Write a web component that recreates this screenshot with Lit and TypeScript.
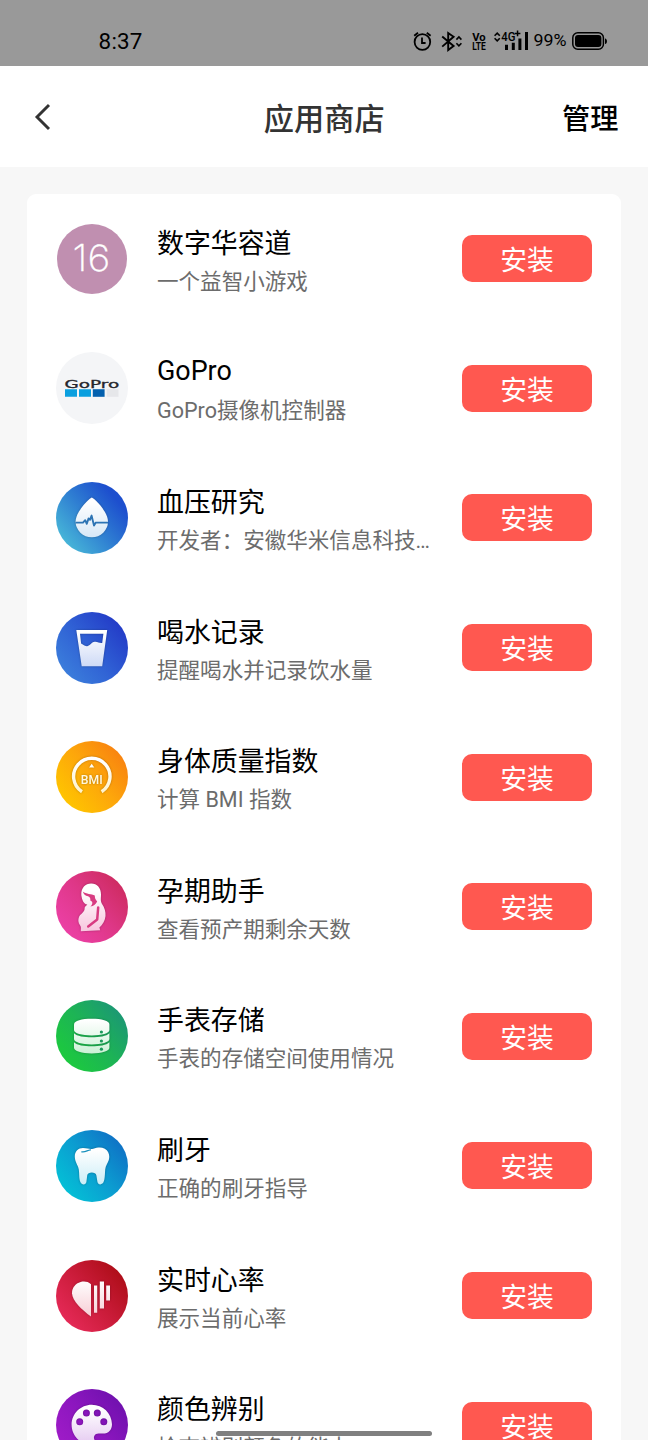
import { LitElement, html, svg, css } from "lit";
import { customElement, property } from "lit/decorators.js";
import { styleMap } from "lit/directives/style-map.js";

interface AppEntry {
  icon: string;
  name: string;
  note: string;
}

const APPS: AppEntry[] = [
  { icon: "puzzle", name: "数字华容道", note: "一个益智小游戏" },
  { icon: "gopro", name: "GoPro", note: "GoPro摄像机控制器" },
  { icon: "blood", name: "血压研究", note: "开发者：安徽华米信息科技有限公司" },
  { icon: "water", name: "喝水记录", note: "提醒喝水并记录饮水量" },
  { icon: "bmi", name: "身体质量指数", note: "计算 BMI 指数" },
  { icon: "pregnancy", name: "孕期助手", note: "查看预产期剩余天数" },
  { icon: "storage", name: "手表存储", note: "手表的存储空间使用情况" },
  { icon: "tooth", name: "刷牙", note: "正确的刷牙指导" },
  { icon: "heart", name: "实时心率", note: "展示当前心率" },
  { icon: "palette", name: "颜色辨别", note: "检查辨别颜色的能力" },
];

const BACKGROUNDS: Record<string, string> = {
  puzzle: "#c08fb0",
  gopro: "#f4f5f7",
  blood: "linear-gradient(50deg, #48b8d8 12%, #2f7fd2 48%, #1d4fce 80%)",
  water: "linear-gradient(50deg, #3c80dc 10%, #2f5fd4 50%, #2238c6 90%)",
  bmi: "linear-gradient(50deg, #ffc400 14%, #fda60b 52%, #f88010 90%)",
  pregnancy: "linear-gradient(50deg, #ec40a6 12%, #de3787 52%, #cc2a5c 92%)",
  storage: "linear-gradient(50deg, #1cc840 17%, #1db356 52%, #1b9478 92%)",
  tooth: "linear-gradient(50deg, #04bfd6 14%, #0c9bd0 52%, #0f6cc4 92%)",
  heart: "linear-gradient(50deg, #e62a58 12%, #c91b38 52%, #aa0c14 92%)",
  palette: "linear-gradient(50deg, #a01cc8 12%, #8b16be 52%, #6c10ac 92%)",
};

const TINTS: Record<string, string> = {
  blood: "#d3e6f6",
  water: "#c9d6f5",
  bmi: "#fff0c0",
  pregnancy: "#f8c9e0",
  storage: "#c4efd0",
  tooth: "#c6ecf6",
  heart: "#f7ccd4",
  palette: "#e3c6f0",
};

const GLYPHS: Record<string, unknown> = {
  puzzle: svg`<text x="16.6" y="48" font-family="Inter, sans-serif" font-weight="200" font-size="36" fill="#fff" stroke="#fff" stroke-width="0.3" textLength="37.6" lengthAdjust="spacingAndGlyphs">16</text>`,
  gopro: svg`
    <text x="8.4" y="35.5" font-family="DejaVu Sans, sans-serif" font-size="10.4" fill="#26262c" stroke="#26262c" stroke-width="0.3" textLength="54.8" lengthAdjust="spacingAndGlyphs">GoPro</text>
    <path fill="#0a9fdf" d="M9 37.2h12v7.6H9zM23 37.2h12v7.6H23z"/>
    <path fill="#0360ae" d="M36.8 37.2h11.8v7.6H36.8z"/>
    <path fill="#e6e7ea" d="M50.7 37.2h11.8v7.6H50.7z"/>`,
  blood: svg`
    <path d="M35.8 15.6C37.5 15.6 52 29.5 52 39.6A16.2 15.6 0 0 1 19.6 39.6C19.6 29.5 34.1 15.6 35.8 15.6Z"/>
    <path fill="none" stroke="#2c74b4" stroke-width="1.9" stroke-linejoin="round" d="M19.6 40.6H27l2.2-2.4 1.6 3.6 1.8-5.4 1.4 1.4 1.6-4.2 2.4 10 1.8-3H52"/>`,
  water: svg`<path fill-rule="evenodd" d="M20.3 18.1H51.2L46.2 54.3H25.7ZM24 21.8L25.1 31.6C27 32.2 28 34.4 31.2 34.2 34.4 33.8 35 30.2 38.8 29.8 42 29.6 43.6 31.6 46.2 31L47.4 21.8Z"/>`,
  bmi: svg`
    <path fill="none" stroke="url(#fg-bmi)" stroke-width="3.4" d="M26 50.8A18.2 18.2 0 1 1 45.6 50.8"/>
    <path d="M35.7 22.8L38.3 26.4H33.1Z"/>
    <text x="24.8" y="43.2" font-family="Roboto, sans-serif" font-weight="500" font-size="12" textLength="21.8" lengthAdjust="spacingAndGlyphs">BMI</text>`,
  pregnancy: svg`
    <path d="M25.3 24C25.2 16.8 29.2 12.6 35.2 12.6 41.2 12.6 45 17.2 45 23.6 45 27.6 44.2 30 46.2 33.2 48.4 36.4 49.9 40.6 49.5 45 49 50.2 46.6 53.6 43.4 56.4L44.2 59.2 24.8 60.2C24.8 57.2 25.4 56 24 54.2 22 51.4 22 48.8 23 46 24.4 42.8 28.6 41.4 28.6 37.8 28.6 35 31 34.8 31.2 33.6 27.6 33 26 29 25.3 24Z"/>
    <path fill="#d83b81" d="M26.8 20.4C30 23.2 35.6 22.6 38.8 24.6 38.8 27.4 39.4 28.8 41.2 30.4 39.6 33.2 37.6 35.2 34.4 35.6 36 34 36.6 32.6 36.2 31 35.8 30.2 35 30.2 34.2 29.6 34.8 27.6 34 26.2 32 25.2 29.4 24.8 27.4 23 26.8 20.4Z"/>
    <path fill="none" stroke="#d83b81" stroke-width="2.5" stroke-linecap="round" stroke-linejoin="round" d="M42.2 36.4L41.2 48.4 32.2 55.4"/>`,
  storage: svg`
    <path d="M18 24.4C18 20.8 25.8 18.8 35.7 18.8S53.4 20.8 53.4 24.4V30C53.4 33.4 45.6 35.4 35.7 35.4S18 33.4 18 30Z"/>
    <path d="M18 33.2C21 36.2 28 37.2 35.7 37.2S50.4 36.2 53.4 33.2V39C53.4 42.2 45.6 44.4 35.7 44.4S18 42.2 18 39Z"/>
    <path d="M18 42.2C21 45.2 28 46.2 35.7 46.2S50.4 45.2 53.4 42.2V47.8C53.4 51.2 45.6 53.4 35.7 53.4S18 51.2 18 47.8Z"/>
    <g fill="#1b9a5c"><circle cx="45.4" cy="32" r="1.6"/><circle cx="45.4" cy="41" r="1.6"/><circle cx="45.4" cy="49.2" r="1.6"/></g>`,
  tooth: svg`
    <path d="M18.8 27C18.6 21.2 22.2 18 27 18 31.6 18 33.4 19.6 37.2 18.8 41.4 17.6 45 16.8 48.8 18.8 53 21.2 54 26 52.8 30 51.8 33.4 49.6 35.4 49.2 39.4 48.8 45 49 51.2 46.4 53.6 44.4 55.2 42 54.4 41.4 51.8L40.4 45.4C39.8 41.6 31.8 41.6 31.2 45.4L30.4 52C29.8 54.6 27.4 55.2 25.4 53.4 22.6 50.2 23.6 44.4 22.8 39.4 22 35 19 32.2 18.8 27Z"/>
    <path fill="none" stroke="#1790bd" stroke-width="1.3" stroke-linecap="round" d="M25.8 21.8C29.4 22.4 31 20.4 34.4 19.8"/>`,
  heart: svg`
    <path d="M35 24.2C32 21.4 28 21.2 24.6 22 19.4 23.4 15.8 28 16 33.2 16.4 41.4 25.6 49.4 35 56.6Z"/>
    <path d="M38 25.6h3.2v27.2H38zM43.8 21.6h4.2v26.8h-4.2zM50.2 25.6h3.8v15h-3.8z"/>`,
  palette: svg`
    <path fill-rule="evenodd" d="M35.8 15.8C24.6 15.8 15.6 24.6 15.6 35.8S24.6 55.8 35.8 55.8C39 55.8 40 53.4 38.8 51.4 36.8 48 38.6 44.6 42.6 44.6H47C52.4 44.6 56 40.8 56 35.2 55.6 24.2 47 15.8 35.8 15.8ZM23.7 29.2a3.5 3.5 0 1 1 0 7 3.5 3.5 0 0 1 0-7ZM30.4 20.4a3.5 3.5 0 1 1 0 7 3.5 3.5 0 0 1 0-7ZM41.3 20.4a3.5 3.5 0 1 1 0 7 3.5 3.5 0 0 1 0-7ZM47.8 29.2a3.5 3.5 0 1 1 0 7 3.5 3.5 0 0 1 0-7Z"/>`,
};

@customElement("app-icon")
export class AppIcon extends LitElement {
  @property() kind = "";

  static styles = css`
    :host { display: flex; flex: none; width: 72px; height: 72px; align-items: center; justify-content: center; }
    .disc { width: 72px; height: 72px; border-radius: 50%; display: flex; align-items: center; justify-content: center; }
    .disc.small { width: 70px; height: 70px; }
    svg { display: block; flex: none; width: 72px; height: 72px; }
    .shaded { filter: drop-shadow(0 0 1.2px rgba(0, 0, 0, 0.28)); }
  `;

  render() {
    const tint = TINTS[this.kind];
    const id = `fg-${this.kind}`;
    return html`<div class="disc ${this.kind === "puzzle" ? "small" : ""}" style=${styleMap({ background: BACKGROUNDS[this.kind] })}>
      <svg class=${tint ? "shaded" : ""} viewBox="0 0 72 72" fill=${tint ? `url(#${id})` : "none"}>
        <defs>
          <linearGradient id=${id} gradientUnits="userSpaceOnUse" x1="0" y1="20" x2="0" y2="58">
            <stop offset="0" stop-color="#fff"></stop>
            <stop offset="1" stop-color=${tint ?? "#fff"}></stop>
          </linearGradient>
        </defs>
        ${GLYPHS[this.kind]}
      </svg>
    </div>`;
  }
}

@customElement("status-bar")
export class StatusBar extends LitElement {
  static styles = css`
    :host { display: flex; height: 66px; box-sizing: border-box; padding: 20px 28px 0 98.6px; justify-content: space-between; background: #999; color: #000; }
    .time { font: 400 22.4px/42px Roboto, sans-serif; letter-spacing: 0.2px; }
    svg { display: block; width: 220px; height: 45px; }
  `;

  render() {
    return html`<span class="time">8:37</span>
      <svg viewBox="400 20 220 45" fill="none" stroke="#000" stroke-width="1.8">
        <circle cx="422.4" cy="42" r="7.8"/>
        <path d="M422 37.6V43H425.6M414.2 35.8L418 32.8M430.6 35.8L426.8 32.8"/>
        <path stroke-width="1.9" d="M442.2 36.4L453.6 46 448.2 50V33L453.6 36.8 442.2 46.6"/>
        <path stroke-width="1.6" d="M456.4 39.6L458.9 37 461.4 39.6M456.4 43.2L458.9 45.8 461.4 43.2"/>
        <path stroke-width="1.6" d="M494.6 35.8L497.2 33.2 499.8 35.8M494.6 38.2L497.2 40.8 499.8 38.2"/>
        <g fill="#000" stroke="none">
          <text x="472.2" y="40.6" font-family="Roboto, sans-serif" font-weight="700" font-size="11.6" textLength="13.4" lengthAdjust="spacingAndGlyphs">Vo</text>
          <text x="472.2" y="50" font-family="Roboto, sans-serif" font-weight="700" font-size="11.2" textLength="13.6" lengthAdjust="spacingAndGlyphs">LTE</text>
          <text x="501.2" y="41.2" font-family="Roboto, sans-serif" font-weight="500" font-size="12.2" textLength="14.2" lengthAdjust="spacingAndGlyphs">4G</text>
          <path d="M516.8 30.6h1.5v2.1h2.1v1.5h-2.1v2.1h-1.5v-2.1h-2.1v-1.5h2.1z"/>
          <path d="M505 44.8h3v5.2h-3zM511.8 42.8h3V50h-3zM518.4 38.4h3V50h-3zM525 32h3v18h-3z"/>
          <text x="533.6" y="46.4" font-family="Roboto, sans-serif" font-size="17" textLength="33" lengthAdjust="spacingAndGlyphs">99%</text>
          <rect x="575" y="35" width="26.4" height="12" rx="3"/>
          <path d="M605 38.4c2.6 0 2.6 5.6 0 5.6z"/>
        </g>
        <rect x="572.8" y="32.8" width="30.6" height="16.4" rx="5" stroke-width="1.5"/>
      </svg>`;
  }
}

@customElement("app-root")
export class AppRoot extends LitElement {
  static styles = css`
    :host { display: flex; flex-direction: column; position: relative; height: 1440px; overflow: hidden; background: #f7f7f7; font-family: Roboto, "Noto Sans CJK SC", sans-serif; color: #000; }
    status-bar { flex: none; }
    .header { flex: none; display: grid; grid-template-columns: 1fr auto 1fr; align-items: center; height: 101px; box-sizing: border-box; padding: 6px 29.5px 0 30px; background: #fff; }
    .back { display: block; width: 26px; height: 30px; margin-top: -7px; }
    .heading { margin: 0; font-size: 30.2px; line-height: 44px; font-weight: 500; color: #333; }
    .manage { justify-self: end; font-size: 28.2px; line-height: 44px; font-weight: 500; }
    .card { flex: none; margin: 27px 27px 0; border-radius: 9px; background: #fff; }
    .row { display: flex; align-items: center; height: 129.6px; box-sizing: border-box; padding: 0 29px; }
    .copy { flex: none; width: 275px; margin-left: 29px; padding-top: 8px; }
    .name { font-size: 26.9px; line-height: 38px; white-space: nowrap; }
    .name.latin { padding-bottom: 2px; margin-top: -2px; }
    .note { font-size: 21.55px; line-height: 38px; color: #6c6c6c; white-space: nowrap; overflow: hidden; text-overflow: ellipsis; }
    .install { margin-left: auto; width: 130px; height: 47px; padding: 5px 0 0; border: 0; border-radius: 10px; background: #ff5850; color: #fff; font: inherit; font-size: 26.8px; line-height: 42px; text-align: center; }
    .home { position: absolute; left: 216px; top: 1431px; width: 216px; height: 5.4px; border-radius: 3px; background: #808080; }
  `;

  render() {
    return html`
      <status-bar></status-bar>
      <header class="header">
        <svg class="back" viewBox="0 0 26 30" fill="none" stroke="#333" stroke-width="2.9"><path d="M19 4L7 16 19 28"/></svg>
        <h1 class="heading">应用商店</h1>
        <span class="manage">管理</span>
      </header>
      <main class="card">
        ${APPS.map(
          (app) => html`<div class="row">
            <app-icon kind=${app.icon}></app-icon>
            <div class="copy">
              <div class="name ${/^[A-Za-z]+$/.test(app.name) ? "latin" : ""}">${app.name}</div>
              <div class="note">${app.note}</div>
            </div>
            <button class="install">安装</button>
          </div>`
        )}
      </main>
      <div class="home"></div>
    `;
  }
}
